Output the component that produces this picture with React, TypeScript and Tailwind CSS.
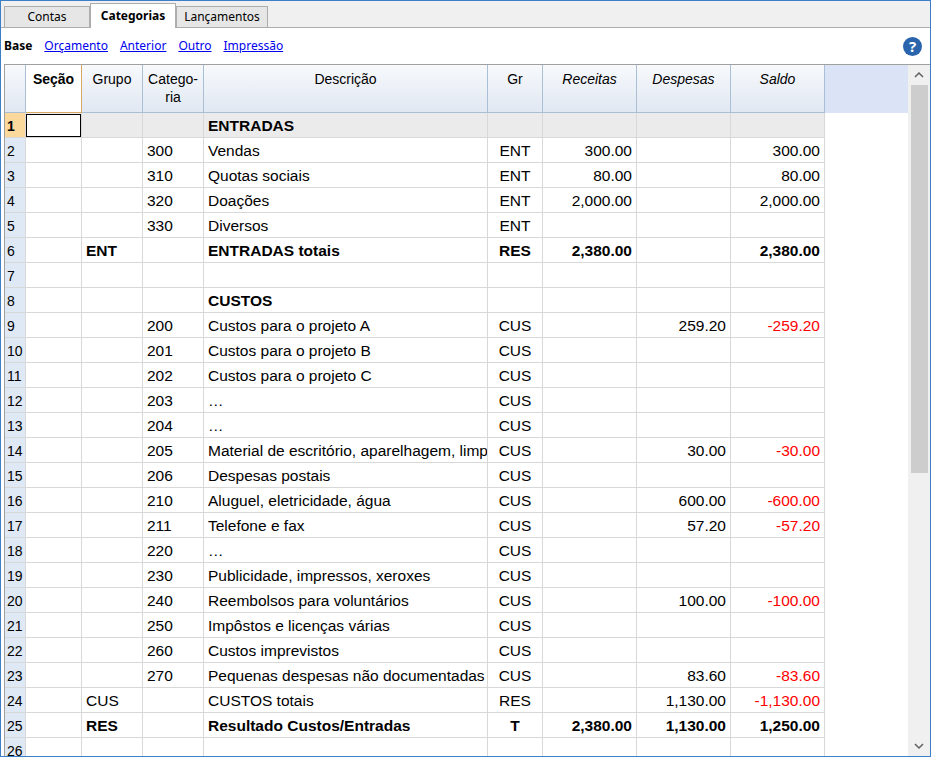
type Row = { n: number; sec?: string; grp?: string; cat?: string; desc?: string; gr?: string; rec?: string; desp?: string; sal?: string; bold?: boolean; red?: boolean; gray?: boolean };

const rows: Row[] = [
  { n: 1, desc: 'ENTRADAS', bold: true, gray: true },
  { n: 2, cat: '300', desc: 'Vendas', gr: 'ENT', rec: '300.00', sal: '300.00' },
  { n: 3, cat: '310', desc: 'Quotas sociais', gr: 'ENT', rec: '80.00', sal: '80.00' },
  { n: 4, cat: '320', desc: 'Doações', gr: 'ENT', rec: '2,000.00', sal: '2,000.00' },
  { n: 5, cat: '330', desc: 'Diversos', gr: 'ENT' },
  { n: 6, grp: 'ENT', desc: 'ENTRADAS totais', gr: 'RES', rec: '2,380.00', sal: '2,380.00', bold: true },
  { n: 7 },
  { n: 8, desc: 'CUSTOS', bold: true },
  { n: 9, cat: '200', desc: 'Custos para o projeto A', gr: 'CUS', desp: '259.20', sal: '-259.20', red: true },
  { n: 10, cat: '201', desc: 'Custos para o projeto B', gr: 'CUS' },
  { n: 11, cat: '202', desc: 'Custos para o projeto C', gr: 'CUS' },
  { n: 12, cat: '203', desc: '…', gr: 'CUS' },
  { n: 13, cat: '204', desc: '…', gr: 'CUS' },
  { n: 14, cat: '205', desc: 'Material de escritório, aparelhagem, limpeza', gr: 'CUS', desp: '30.00', sal: '-30.00', red: true },
  { n: 15, cat: '206', desc: 'Despesas postais', gr: 'CUS' },
  { n: 16, cat: '210', desc: 'Aluguel, eletricidade, água', gr: 'CUS', desp: '600.00', sal: '-600.00', red: true },
  { n: 17, cat: '211', desc: 'Telefone e fax', gr: 'CUS', desp: '57.20', sal: '-57.20', red: true },
  { n: 18, cat: '220', desc: '…', gr: 'CUS' },
  { n: 19, cat: '230', desc: 'Publicidade, impressos, xeroxes', gr: 'CUS' },
  { n: 20, cat: '240', desc: 'Reembolsos para voluntários', gr: 'CUS', desp: '100.00', sal: '-100.00', red: true },
  { n: 21, cat: '250', desc: 'Impôstos e licenças várias', gr: 'CUS' },
  { n: 22, cat: '260', desc: 'Custos imprevistos', gr: 'CUS' },
  { n: 23, cat: '270', desc: 'Pequenas despesas não documentadas', gr: 'CUS', desp: '83.60', sal: '-83.60', red: true },
  { n: 24, grp: 'CUS', desc: 'CUSTOS totais', gr: 'RES', desp: '1,130.00', sal: '-1,130.00', red: true },
  { n: 25, grp: 'RES', desc: 'Resultado Custos/Entradas', gr: 'T', rec: '2,380.00', desp: '1,130.00', sal: '1,250.00', bold: true },
  { n: 26 },
];

const cell = 'h-full border-r border-b border-[#d8d8d8] px-1 pt-[2px] flex items-center overflow-hidden whitespace-nowrap shrink-0';
const head = 'h-full border-r border-b border-[#a9bfd6] bg-gradient-to-b from-[#f7f9fc] to-[#e1e8f2] text-[14px] text-center pt-[5px] leading-[18px] shrink-0';

export default function App() {
  return (
    <div className="w-[931px] h-[757px] bg-white border border-[#3c7fc4] flex flex-col overflow-hidden text-black" style={{ fontFamily: '"Liberation Sans", Arial, sans-serif' }}>
      <div className="h-[27px] bg-[#f0f0f0] flex items-end pl-[3px] border-b border-[#adadad] text-[12px]" style={{ fontFamily: '"Noto Sans", sans-serif' }}>
        <div className="w-[86px] h-[21px] border border-b-0 border-[#adadad] bg-[#e6e6e6] flex items-center justify-center">Contas</div>
        <div className="w-[86px] h-[25px] border border-b-0 border-[#adadad] bg-white flex items-center justify-center font-bold -mb-px">Categorias</div>
        <div className="w-[92px] h-[21px] border border-b-0 border-[#adadad] bg-[#e6e6e6] flex items-center justify-center">Lançamentos</div>
      </div>
      <div className="h-[36px] flex items-center pl-[3px] pr-[8px] gap-[12px] text-[12px]" style={{ fontFamily: '"Noto Sans", sans-serif' }}>
        <span className="font-bold">Base</span>
        <span className="text-[#0000ee] underline">Orçamento</span>
        <span className="text-[#0000ee] underline">Anterior</span>
        <span className="text-[#0000ee] underline">Outro</span>
        <span className="text-[#0000ee] underline">Impressão</span>
        <div className="ml-auto w-[19px] h-[19px] rounded-full bg-[#2a64ad] text-white font-bold text-[15px] flex items-center justify-center">?</div>
      </div>
      <div className="flex flex-1 min-h-0 ml-[3px] border-t border-l border-[#a0a0a0]">
        <div className="flex-1 flex flex-col overflow-hidden">
          <div className="h-[48px] flex shrink-0">
            <div className={`${head} w-[21px]`} />
            <div className={`${head} w-[56px] font-bold !bg-none bg-gradient-to-b from-[#fbe0b0] to-[#f3c47a] border-[#d8a860]`}>Seção</div>
            <div className={`${head} w-[61px]`}>Grupo</div>
            <div className={`${head} w-[61px]`}>Catego-<br />ria</div>
            <div className={`${head} w-[284px]`}>Descrição</div>
            <div className={`${head} w-[55px]`}>Gr</div>
            <div className={`${head} w-[94px] italic`}>Receitas</div>
            <div className={`${head} w-[94px] italic`}>Despesas</div>
            <div className={`${head} w-[94px] italic`}>Saldo</div>
            <div className="h-full flex-1 bg-[#dae4f6]" />
          </div>
          {rows.map((r) => (
            <div key={r.n} className={`h-[25px] flex shrink-0 text-[15.5px] ${r.bold ? 'font-bold' : ''}`}>
              <div className={`${cell} w-[21px] px-[2px] text-[14px] ${r.n === 1 ? 'bg-[#fbd89c] font-bold' : 'bg-[#dfe8f5] font-normal'} border-[#c8d4e4]`}>{r.n}</div>
              <div className={`${cell} w-[56px] ${r.gray ? 'bg-[#ebebeb]' : ''}`}>
                {r.n === 1 && <div className="w-[56px] h-[23px] -mx-1 -mt-[2px] bg-white border border-black" />}
              </div>
              <div className={`${cell} w-[61px] ${r.gray ? 'bg-[#ebebeb]' : ''}`}>{r.grp}</div>
              <div className={`${cell} w-[61px] ${r.gray ? 'bg-[#ebebeb]' : ''}`}>{r.cat}</div>
              <div className={`${cell} w-[284px] ${r.gray ? 'bg-[#ebebeb]' : ''}`}>{r.desc}</div>
              <div className={`${cell} w-[55px] justify-center bg-white ${r.gray ? '!bg-[#ebebeb]' : ''}`}>{r.gr}</div>
              <div className={`${cell} w-[94px] justify-end ${r.gray ? 'bg-[#ebebeb]' : ''}`}>{r.rec}</div>
              <div className={`${cell} w-[94px] justify-end ${r.gray ? 'bg-[#ebebeb]' : ''}`}>{r.desp}</div>
              <div className={`${cell} w-[94px] justify-end ${r.gray ? 'bg-[#ebebeb]' : ''} ${r.red ? 'text-[#ff0000]' : ''}`}>{r.sal}</div>
            </div>
          ))}
        </div>
        <div className="w-[22px] bg-[#f0f0f0] flex flex-col items-center shrink-0">
          <svg width="22" height="20" viewBox="0 0 22 20"><path d="M7 12l4-4 4 4" fill="none" stroke="#606060" strokeWidth="1.5" /></svg>
          <div className="w-[17px] h-[388px] bg-[#cdcdcd]" />
          <div className="flex-1" />
          <svg width="22" height="20" viewBox="0 0 22 20"><path d="M7 8l4 4 4-4" fill="none" stroke="#606060" strokeWidth="1.5" /></svg>
        </div>
      </div>
    </div>
  );
}
